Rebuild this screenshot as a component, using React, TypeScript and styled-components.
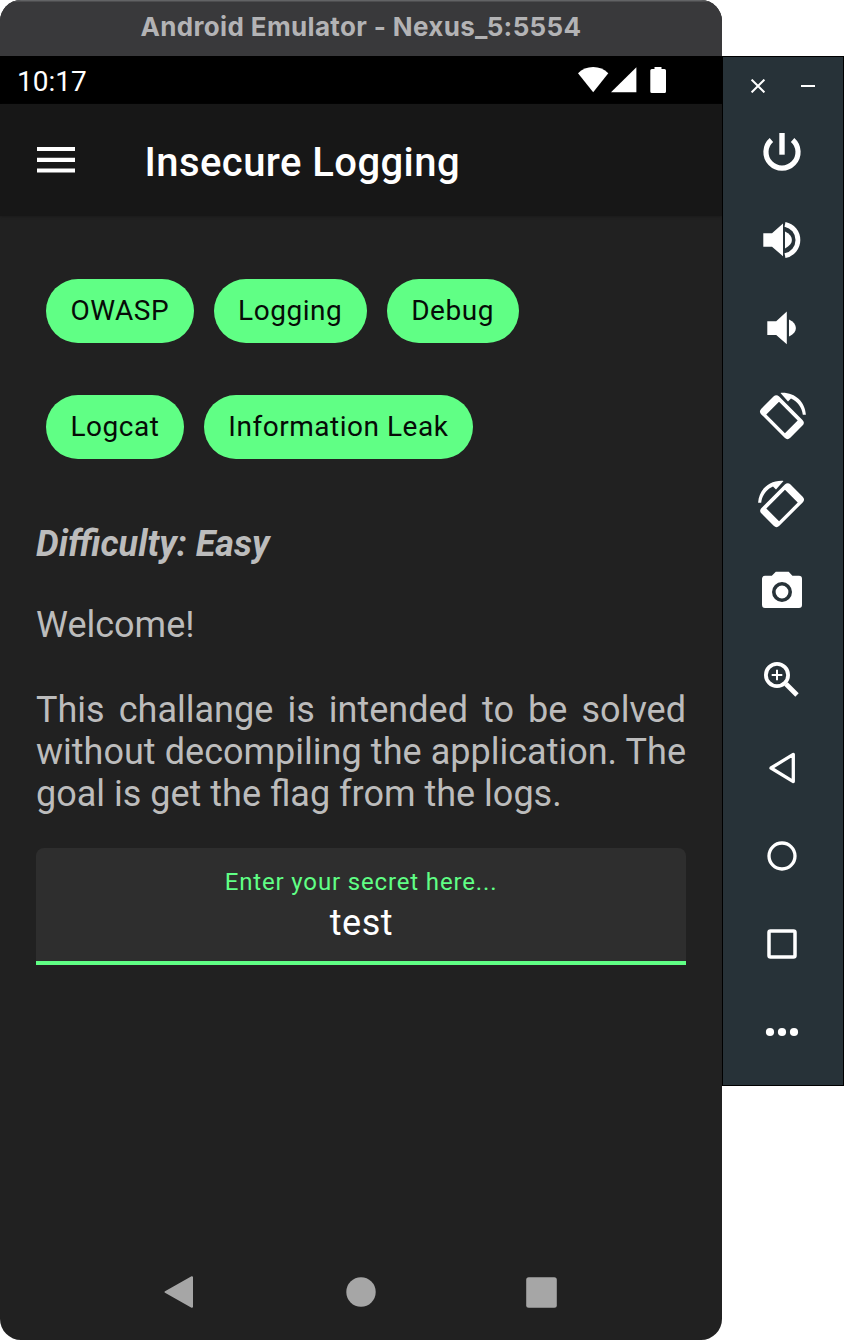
import React from 'react';
import styled, { createGlobalStyle } from 'styled-components';

const GlobalStyle = createGlobalStyle`
  *, *::before, *::after { box-sizing: border-box; }
  body { margin: 0; background: #fff; font-family: Roboto, "Liberation Sans", sans-serif; }
  svg { display: block; flex: none; }
`;

const Desktop = styled.div`
  display: flex;
  align-items: flex-start;
  width: 844px;
  height: 1340px;
`;

const Phone = styled.main`
  display: flex;
  flex-direction: column;
  width: 722px;
  height: 1340px;
  border-radius: 21px;
  overflow: hidden;
  background: #212121;
`;

const WindowTitle = styled.header`
  height: 56px;
  background: #39393b;
  box-shadow: inset 0 2px 0 -0.5px #626365;
  color: #b3b3b5;
  font: 700 26px/54px Inter, sans-serif;
  text-align: center;
  white-space: nowrap;
`;

const TitleText = styled.span`
  letter-spacing: 0.35px;
`;

const StatusBar = styled.div`
  display: flex;
  justify-content: space-between;
  align-items: center;
  height: 48px;
  padding: 0 55px 0 17px;
  background: #000;
  color: #fff;
  font-size: 28px;
  line-height: 48px;
`;

const Clock = styled.span`
  padding-top: 4px;
`;

const AppBar = styled.div`
  display: flex;
  align-items: center;
  height: 112px;
  padding-left: 37px;
  gap: 69.5px;
  background: #171717;
  box-shadow: 0 1px 2px #1b1b1b;
  color: #fff;
`;

const ScreenTitle = styled.h1`
  margin: 0;
  padding-top: 6px;
  font-size: 40px;
  font-weight: 500;
  line-height: 48px;
  letter-spacing: 0.43px;
`;

const Content = styled.section`
  flex: 1;
  padding: 62.5px 36px 0;
  color: #bcbcbc;
  font-size: 36px;
  line-height: 42px;
`;

const ChipRow = styled.div`
  display: flex;
  gap: 20px;
  margin: 0 0 52px 10px;
`;

const Chip = styled.span`
  height: 64.4px;
  padding: 0 24.6px 0 24.4px;
  border-radius: 33px;
  background: #60ff85;
  color: #060b07;
  font-size: 28px;
  line-height: 64.5px;
  letter-spacing: 0.52px;
`;

const Difficulty = styled.p`
  margin: 64px 0 39px;
  font-weight: 700;
  font-style: italic;
`;

const Paragraph = styled.p`
  margin: 0 0 43px;
  text-align: justify;
`;

const Field = styled.label`
  display: flex;
  flex-direction: column;
  align-items: center;
  height: 117px;
  margin-top: -10.5px;
  padding-top: 19px;
  border-bottom: 4px solid #60ff85;
  border-radius: 8px 8px 0 0;
  background: #2e2e2e;
`;

const FieldLabel = styled.span`
  color: #60ff85;
  font-size: 24px;
  line-height: 30px;
  letter-spacing: 0.85px;
`;

const FieldValue = styled.span`
  margin-top: 5px;
  padding-left: 0.8px;
  color: #fff;
  font-size: 36px;
  line-height: 42px;
  letter-spacing: 0.5px;
`;

const NavBar = styled.nav`
  display: flex;
  align-items: center;
  justify-content: space-between;
  height: 96px;
  padding: 0 165px 0 164px;
`;

const Toolbar = styled.aside`
  display: flex;
  flex-direction: column;
  align-items: center;
  width: 122px;
  height: 1030px;
  margin-top: 56px;
  padding-right: 2px;
  border: 1px solid #000;
  background: #273238;
`;

const WindowControls = styled.div`
  display: flex;
  justify-content: space-between;
  width: 64px;
  height: 51px;
  padding-top: 22px;
  margin-left: 2px;
`;

const ToolButton = styled.div`
  display: flex;
  align-items: center;
  justify-content: center;
  width: 60px;
  height: 88px;
`;

const PhoneShape = () => (
  <g transform="translate(-0.1 1.2) rotate(-45)">
    <path
      fillRule="evenodd"
      d="M-8.6 -20.5H8.6A4 4 0 0 1 12.6 -16.5V16.5A4 4 0 0 1 8.6 20.5H-8.6A4 4 0 0 1 -12.6 16.5V-16.5A4 4 0 0 1 -8.6 -20.5ZM-9.2 -12.9V13.5H8.8V-12.9Z"
    />
  </g>
);

const RotateShape = () => (
  <>
    <PhoneShape />
    <path d="M-1.5 -23.1L6 -14.6L9 -17.6C15.5 -14.8 20 -8.6 20.8 -1.3H23.9C23 -14.2 13 -24 -1.5 -23.1Z" />
  </>
);

const line = { fill: 'none', stroke: '#fff' };

const tools: { name: string; art: React.ReactNode }[] = [
  {
    name: 'Power',
    art: (
      <>
        <path {...line} strokeWidth="5.2" d="M-10.6 -12A16.05 16.05 0 1 0 10.6 -12" />
        <path d="M-2.7 -19H2.7V2.7H-2.7Z" />
      </>
    ),
  },
  {
    name: 'Volume up',
    art: (
      <>
        <path d="M-18.7 -6.7H-10L1 -16.4V16.2L-10 6.7H-18.7Z" />
        <path d="M3 -8.4C7.6 -6.2 9.9 -3.3 9.9 0C9.9 3.3 7.6 6.2 3 8.4Z" />
        <path {...line} strokeWidth="4.8" d="M3 -15.7A16 16 0 0 1 3 15.7" />
      </>
    ),
  },
  {
    name: 'Volume down',
    art: (
      <>
        <path d="M-14.7 -6.7H-5.8L4.8 -16.4V16.2L-5.8 6.9H-14.7Z" />
        <path d="M7 -8.6C11.6 -6.4 13.9 -3.4 13.9 0C13.9 3.4 11.6 6.4 7 8.6Z" />
      </>
    ),
  },
  { name: 'Rotate left', art: <RotateShape /> },
  {
    name: 'Rotate right',
    art: (
      <g transform="scale(-1 1)">
        <RotateShape />
      </g>
    ),
  },
  {
    name: 'Screenshot',
    art: (
      <>
        <path d="M-17 -16.2H-10.2L-6.2 -20.2H6.7L10.4 -16.2H17A3 3 0 0 1 20 -13.2V13A3 3 0 0 1 17 16H-17A3 3 0 0 1 -20 13V-13.2A3 3 0 0 1 -17 -16.2Z" />
        <circle r="8.2" fill="none" stroke="#273238" strokeWidth="3.6" />
      </>
    ),
  },
  {
    name: 'Zoom',
    art: (
      <>
        <circle cx="-5" cy="-5" r="11.1" {...line} strokeWidth="3.8" />
        <path {...line} strokeWidth="2" d="M-10.3 -5H0.3M-5 -10.3V0.3" />
        <path {...line} strokeWidth="4.8" d="M4 4L15 15" />
      </>
    ),
  },
  {
    name: 'Back',
    art: <path {...line} strokeWidth="3.3" strokeLinejoin="round" d="M-11 0L11.3 -13.6V13.6Z" />,
  },
  { name: 'Home', art: <circle r="13" {...line} strokeWidth="3.3" /> },
  {
    name: 'Overview',
    art: <rect x="-13" y="-13" width="26" height="26" rx="1.5" {...line} strokeWidth="3.5" />,
  },
  {
    name: 'More',
    art: (
      <>
        <circle cx="-12" r="4.1" />
        <circle r="4.1" />
        <circle cx="12" r="4.1" />
      </>
    ),
  },
];

const chipRows = [
  ['OWASP', 'Logging', 'Debug'],
  ['Logcat', 'Information Leak'],
];

export default function App() {
  return (
    <>
      <GlobalStyle />
      <Desktop>
        <Phone>
          <WindowTitle>
            <TitleText>Android Emulator - Nexus_5:5554</TitleText>
          </WindowTitle>
          <StatusBar>
            <Clock>10:17</Clock>
            <svg width="89" height="28" viewBox="0 0 89 28" fill="#fff">
              <path d="M0 7.2C4 3 9.300 1 15.200 1C21 1 26.300 3 30.300 7.200L15.200 26.300Z" />
              <path d="M33 26.300L58.400 1.300V26.300Z" />
              <path d="M76.500 1H83.500V3H86.500A1.500 1.500 0 0 1 88 4.500V25.500A1.500 1.500 0 0 1 86.500 27H73.800A1.500 1.500 0 0 1 72.300 25.500V4.500A1.500 1.500 0 0 1 73.800 3H76.500Z" />
            </svg>
          </StatusBar>
          <AppBar>
            <svg width="38" height="26" viewBox="0 0 38 26" fill="#fff">
              <path d="M0 0H38V4.100H0ZM0 10.700H38V15H0ZM0 21.400H38V25.600H0Z" />
            </svg>
            <ScreenTitle>Insecure Logging</ScreenTitle>
          </AppBar>
          <Content>
            {chipRows.map((row) => (
              <ChipRow key={row[0]}>
                {row.map((label) => (
                  <Chip key={label}>{label}</Chip>
                ))}
              </ChipRow>
            ))}
            <Difficulty>Difficulty: Easy</Difficulty>
            <Paragraph>Welcome!</Paragraph>
            <Paragraph>
              This challange is intended to be solved without decompiling the application. The goal
              is get the flag from the logs.
            </Paragraph>
            <Field>
              <FieldLabel>Enter your secret here...</FieldLabel>
              <FieldValue>test</FieldValue>
            </Field>
          </Content>
          <NavBar>
            <svg width="30" height="34" viewBox="0 0 30 34" fill="#a6a6a6" stroke="#a6a6a6" strokeWidth="2" strokeLinejoin="round">
              <path d="M1.500 17L28 2.200V31.800Z" />
            </svg>
            <svg width="32" height="30" viewBox="0 0 32 30" fill="#a6a6a6">
              <circle cx="17" cy="15" r="14.700" />
            </svg>
            <svg width="31" height="31" viewBox="0 0 31 31" fill="#a6a6a6">
              <rect x="0.200" y="0.200" width="30.600" height="30.600" rx="2.500" />
            </svg>
          </NavBar>
        </Phone>
        <Toolbar>
          <WindowControls>
            <svg width="14" height="14" viewBox="0 0 14 14" {...line} strokeWidth="2">
              <path d="M0.600 0.600L13.400 13.400M13.400 0.600L0.600 13.400" />
            </svg>
            <svg width="14" height="14" viewBox="0 0 14 14" fill="#fff">
              <path d="M0 6H14V8H0Z" />
            </svg>
          </WindowControls>
          {tools.map((tool) => (
            <ToolButton key={tool.name}>
              <svg width="60" height="60" viewBox="-30 -30 60 60" fill="#fff" role="img" aria-label={tool.name}>
                {tool.art}
              </svg>
            </ToolButton>
          ))}
        </Toolbar>
      </Desktop>
    </>
  );
}
